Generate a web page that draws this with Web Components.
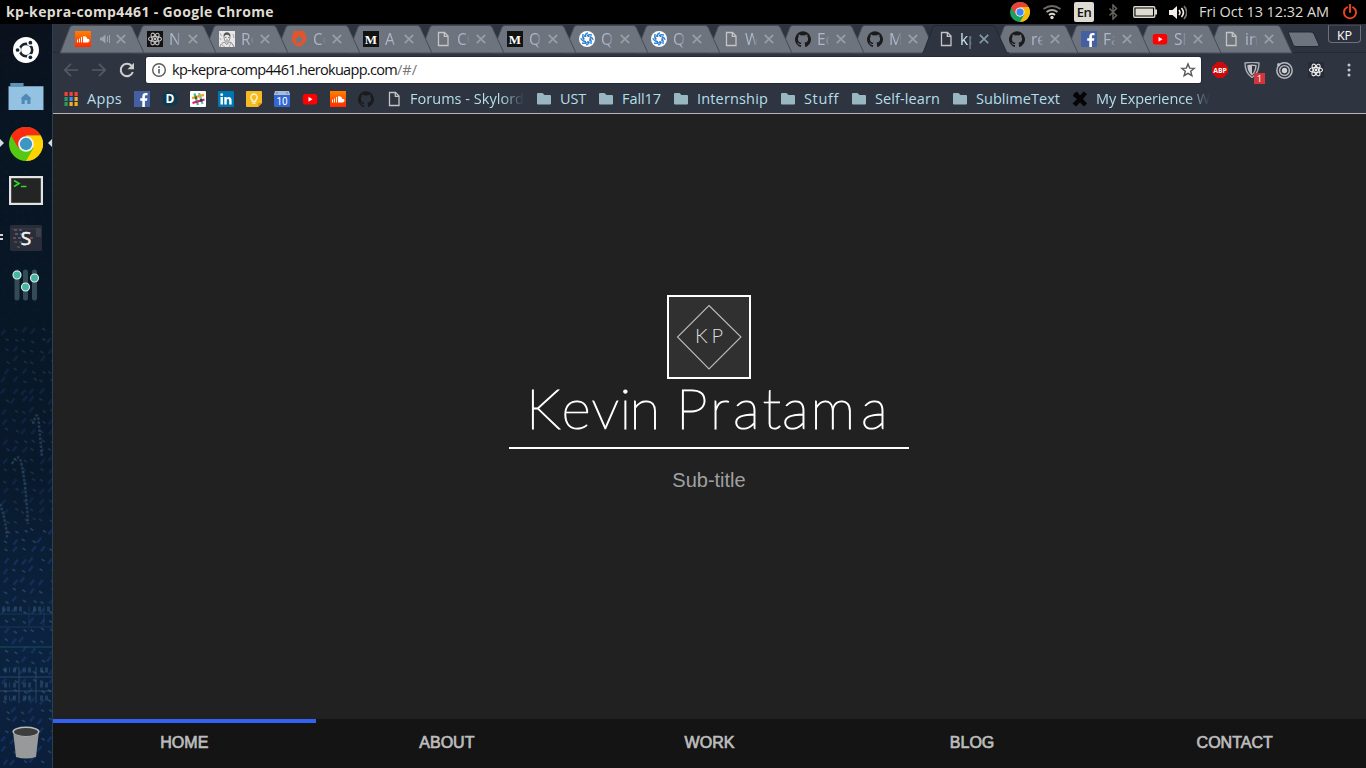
<!DOCTYPE html>
<html lang="en">
<head>
<meta charset="utf-8">
<title>kp-kepra-comp4461 - Google Chrome</title>
<style>
html,body{margin:0;height:100%;overflow:hidden;background:#000}
body{font-family:"Open Sans","Noto Sans",sans-serif}
</style>
</head>
<body>
<desk-top></desk-top>
<script>
const GH='<path fill="#1b1b1d" d="M8 .3a8 8 0 0 0-2.500 15.600c.4.1.5-.2.5-.4v-1.500c-2.200.5-2.700-.9-2.700-.9-.4-1-.9-1.200-.9-1.200-.7-.5.1-.5.1-.5.8.1 1.200.8 1.200.8.7 1.200 1.900.9 2.300.7.1-.5.3-.9.5-1.100-1.800-.2-3.600-.9-3.600-4 0-.9.3-1.600.8-2.100-.1-.2-.4-1 .1-2.100 0 0 .7-.2 2.200.8a7.600 7.600 0 0 1 4 0c1.500-1 2.200-.8 2.200-.8.4 1.100.2 1.900.1 2.100.5.6.8 1.300.8 2.100 0 3.100-1.900 3.700-3.700 4 .3.2.6.7.6 1.500v2.200c0 .2.1.5.5.4A8 8 0 0 0 8 .3z"/>';
const rays=(n,r1,r2,c,w)=>Array.from({length:n},(_,i)=>{const a=i*2*Math.PI/n,b=a+.9;return `<path d="M${8+r1*Math.cos(a)} ${8+r1*Math.sin(a)}A${r2} ${r2} 0 0 1 ${8+r2*Math.cos(b)} ${8+r2*Math.sin(b)}" fill="none" stroke="${c}" stroke-width="${w}"/>`}).join('');
const atom=c=>`<g fill="none" stroke="${c}" stroke-width="1.100"><ellipse cx="8" cy="8" rx="6.500" ry="2.500"/><ellipse cx="8" cy="8" rx="6.500" ry="2.500" transform="rotate(60 8 8)"/><ellipse cx="8" cy="8" rx="6.500" ry="2.500" transform="rotate(120 8 8)"/></g><circle cx="8" cy="8" r="1.400" fill="${c}"/>`;
const chrome=(r,y,g,b)=>`<circle cx="8" cy="8" r="8" fill="${g}"/><path d="M1.070 4A8 8 0 0 1 14.930 4H8L4.540 10z" fill="${r}"/><path d="M14.930 4A8 8 0 0 1 8 16L11.460 10 8 4z" fill="${y}"/><path d="M1.070 4L4.540 10 8 8V4z" fill="${r}"/><circle cx="8" cy="8" r="3.700" fill="#f3f3f3"/><circle cx="8" cy="8" r="2.900" fill="${b}"/>`;
const ICONS={
 github:GH,
 soundcloud:'<defs><linearGradient id="g" x2="0" y2="1"><stop stop-color="#ff8000"/><stop offset="1" stop-color="#ff2a00"/></linearGradient></defs><path fill="url(#g)" d="M0 0h16v16H0z"/><path d="M2.500 8.500v3M4.500 7.500v4M6.500 6v5.500" stroke="#fff" stroke-width="1"/><path fill="#fff" d="M8 5.500c2.200-1 4 .3 4.200 2.400 3-.6 3 3.600.3 3.600H8z"/>',
 react:'<path d="M0 0h16v16H0z" fill="#111"/>'+atom('#c2c2c2'),
 reactx:'<path d="M0 0h16v16H0z" fill="#272b35"/>'+atom('#f0f0f0'),
 photo:'<path fill="#e8e8e8" d="M0 0h16v16H0z"/><path d="M4.500 5c0-5 7-5 7 0l-1 0c-2-2-3.500-1-5 0z" fill="#555"/><path d="M5 5c0 4 1.500 6 3 6s3-2 3-6M6 6.500h1.500M9 6.500h1.500M7 9h2M1 16c1-4 3-4 4.500-5l2 2.500 3-2.500c3 1 3 2 4.500 5" stroke="#777" stroke-width=".9" fill="none"/><path d="M3 14l3 2M12 12l-2 4M1 2l1.500 3M1 7l1 2M14 3l1 4" stroke="#999" stroke-width=".8"/>',
 auth0:'<path fill="#e2552c" d="M3 0h10L15.500 7.500C15 12 11 14.500 8 16 5 14.500 1 12 .5 7.500z"/><path fill="#707680" d="M8 3.500l1.300 3.400H13l-2.900 2.400 1 3.700L8 10.800 4.900 13l1-3.700L3 6.900h3.700z"/>',
 medium:'<path d="M0 0h16v16H0z" fill="#121212"/><text x="8" y="12.500" font-size="13" text-anchor="middle" font-weight="700" fill="#fff" font-family="Liberation Serif,serif">M</text>',
 doc:'<path d="M3.500 1.500h6L13 5v9.500H3.500zM9.300 1.500V5.300H13" fill="none" stroke="#c4c4c4" stroke-width="1.300"/>',
 swirl:'<circle cx="8" cy="8" r="8" fill="#fff"/>'+rays(8,3.5,6.3,'#2f86dc',1.5)+'<circle cx="8" cy="8" r="3.200" fill="#fff" stroke="#2269ad" stroke-width="1.300" stroke-dasharray="2 1"/>',
 facebook:'<path fill="#4460a0" d="M0 0h16v16H0z"/><path fill="#fff" d="M8.300 16V9.700H6.200V7.200h2.100V5.400c0-2.200 1.300-3.400 3.300-3.400l1.900.1v2.200h-1.300c-1 0-1.300.5-1.300 1.200v1.700h2.500l-.4 2.500h-2.100V16z"/>',
 youtube:'<rect x=".8" y="3" width="14.400" height="10.400" rx="2.600" fill="#f00"/><path fill="#fff" d="M6.500 5.700v5l4-2.500z"/>',
 disq:'<path fill="#0b3a50" d="M4 1h8l3.500 4v6L12 15H4L.5 11V5z"/><text x="8" y="12.300" font-size="12" font-weight="700" text-anchor="middle" fill="#fff" font-family="Open Sans,sans-serif">D</text>',
 slack:'<rect width="16" height="16" rx="1" fill="#fff"/><g stroke-width="2.300"><path d="M4.500 2.500l3.500 11.500" stroke="#3eb991"/><path d="M9 2l3.500 11" stroke="#5cc5c9"/><path d="M2 7.200L14 3.800" stroke="#e9a820"/><path d="M2.500 12L14.500 8.500" stroke="#e01765"/><path d="M5.400 5.400l.8 2.600" stroke="#3f5f3a"/><path d="M10.900 8l.7 2.600" stroke="#472d49"/></g>',
 linkedin:'<rect width="16" height="16" rx="1" fill="#0077b5"/><path fill="#fff" d="M2.500 6H5v7.500H2.500zM6.300 6h2.300v1c1.300-1.900 5-1.400 5 2v4.500h-2.400V9.700c0-2.200-2.500-2-2.500 0v3.800H6.300z"/><circle cx="3.700" cy="3.700" r="1.400" fill="#fff"/>',
 keep:'<path fill="#f6bb20" d="M1 0h14q1 0 1 1v11l-4 4H1q-1 0-1-1V1q0-1 1-1z"/><path d="M12 16v-4h4z" fill="#e39b08"/><path d="M8 3a3.300 3.300 0 0 0-1.700 6v1.500h3.400V9A3.300 3.300 0 0 0 8 3zM6.500 12.300h3" fill="none" stroke="#fff4ca" stroke-width="1.300"/>',
 calendar:'<path fill="#3367d6" d="M0 2h16v13q0 1-1 1H1q-1 0-1-1z"/><path fill="#a9bdd9" d="M1 0h14l1 4H0z"/><path d="M3 1v2M13 1v2" stroke="#777"/><text x="8" y="13.500" font-size="10" text-anchor="middle" fill="#fff" font-family="Roboto,sans-serif">10</text>',
 apps:['#f0433a','#f0433a','#f0433a','#2d9b5f','#3f8cf4','#f0b020','#2d9b5f','#f0b020','#f0b020'].map((c,i)=>`<rect x="${1.5+i%3*5}" y="${1+(i/3|0)*5}" width="3.200" height="4" fill="${c}"/>`).join(''),
 folder:'<path fill="#98b7c1" d="M2 2h4.500l2 2H14q1 0 1 1v7.500q0 1-1 1H2q-1 0-1-1V3q0-1 1-1z"/>',
 xmark:'<path d="M2 2.500l3-2 3 4 3.500-4L15 3l-4 5 4 4.500-3 3-4-4-4 4-3.500-3L5 8 1 5z" fill="#050505"/>',
 ubuntu:'<circle cx="8" cy="8" r="8" fill="#fff"/><circle cx="8" cy="8" r="3.800" fill="none" stroke="#1a2530" stroke-width="1.600"/><g fill="#fff"><circle cx="2.900" cy="8" r="2"/><circle cx="10.600" cy="3.600" r="2"/><circle cx="10.600" cy="12.400" r="2"/></g><g fill="#1a2530"><circle cx="2.800" cy="8" r="1.150"/><circle cx="10.700" cy="3.500" r="1.150"/><circle cx="10.700" cy="12.500" r="1.150"/></g>',
 files:'<path fill="#94c2e3" d="M.1 1.500h15.800v10.700H.1z"/><path fill="#5b93b9" d="M.9 0h6v1.500h-6z"/><path fill="#5189b5" d="M8 4.700l2.500 2.300H10v2.500H8.600V7.800H7.400v1.700H6V7h-.5z"/>',
 chromeb:chrome('#fa2c12','#ffd200','#55c813','#3a98c3'),
 chromep:chrome('#ea4335','#fbbc05','#19a15f','#4285f4'),
 terminal:'<path fill="#e2e3e2" d="M0 0h34v29H0z"/><path fill="#222524" d="M2.200 2.200h29.600v24.600H2.200z"/><path d="M5 4.500l5 3-5 3M12 10.500h5.500" stroke="#32d72f" stroke-width="1.700" fill="none"/>',
 sublime:'<rect width="32" height="26" rx="1.500" fill="#292c39"/><path d="M1 4h30" stroke="#3b3e4c"/><g stroke="#a46b72" stroke-dasharray="3 2"><path d="M4 5h10M3 13h8M20 13h5"/><path d="M5 9h9M13 20h5" stroke="#668f9d"/><path d="M4 17h9M7 22h4" stroke="#68655b"/></g><path d="M26 3v9h5V3z" fill="#3c404b"/><text x="16" y="20" font-size="19" text-anchor="middle" fill="#f4f4f4" stroke="#f4f4f4" stroke-width=".6" font-family="Open Sans,sans-serif">S</text>',
 mixer:'<g stroke="#334b56" stroke-width="5" stroke-linecap="round"><path d="M5 3v26M13.500 3v26M22.500 3v26"/></g><g stroke="#e9efed" stroke-width="1.100" fill="#45b6a1"><circle cx="5" cy="6" r="4"/><circle cx="13.500" cy="18" r="4"/><circle cx="22.500" cy="9" r="4"/></g>',
 trash:'<path d="M1 5l3 26q10 3 20 0l3-26z" fill="#97999b"/><ellipse cx="14" cy="5.500" rx="13.500" ry="5" fill="#b8babb"/><ellipse cx="14" cy="6" rx="12" ry="4" fill="#3d3d3d"/>',
 wifi:'<g fill="none" stroke="#dfdbd2" stroke-width="1.800"><path d="M7 11q3-2.500 6 0"/><path d="M4.500 8q5.500-4 11 0" stroke="#aaa7a1"/><path d="M1.500 5q8.500-6 17 0" stroke="#6c6a67"/></g><circle cx="10" cy="13.500" r="1.700" fill="#dfdbd2"/>',
 bt:'<path d="M1.500 4.500l7 7-3.500 3.500V1l3.500 3.500-7 7" fill="none" stroke="#66645f" stroke-width="1.500"/>',
 battery:'<rect x=".75" y=".75" width="21" height="10.500" rx="1" fill="none" stroke="#dfdbd2" stroke-width="1.300"/><path d="M2.500 2.500h17.500v7H2.500zM22 3.500h2v5h-2z" fill="#dfdbd2"/>',
 volume:'<path d="M0 5h3.500L8 1v13L3.500 10H0z" fill="#f3f0e9"/><g fill="none" stroke="#f3f0e9" stroke-width="1.600"><path d="M10 5q2 2.500 0 5"/><path d="M12.500 3q3.800 4.500 0 9"/><path d="M15 1q5.500 6.500 0 13" stroke="#777"/></g>',
 power:'<path d="M5 3.200a6 6 0 1 0 6 0M8 .5V8" fill="none" stroke="#f0441f" stroke-width="1.900" stroke-linecap="round"/>',
 back:'<path d="M15 8H2M8 1.800L1.800 8 8 14.200" fill="none" stroke="#555961" stroke-width="1.700"/>',
 fwd:'<path d="M1 8H14M8 1.800L14.200 8 8 14.200" fill="none" stroke="#555961" stroke-width="1.700"/>',
 reload:'<path d="M13.800 10A6.200 6.200 0 1 1 12.500 3.700" fill="none" stroke="#cdcdcd" stroke-width="2.100"/><path d="M15 .7v6.500H8.500z" fill="#cdcdcd"/>',
 info:'<circle cx="8" cy="8" r="6.300" fill="none" stroke="#5a5a5a" stroke-width="1.400"/><path d="M8 7v4.500M8 4.300v1.700" stroke="#5a5a5a" stroke-width="1.600"/>',
 star:'<path d="M8 1.900l1.700 4.200 4.500.3-3.500 2.900 1.200 4.400L8 11.300l-3.900 2.400 1.200-4.400-3.500-2.900 4.500-.3z" fill="none" stroke="#5a5a5a" stroke-width="1.400"/>',
 abp:'<path d="M5 0h6l5 5v6l-5 5H5l-5-5V5z" fill="#cc0b0b"/><text x="1.200" y="10.900" font-size="7.800" font-weight="700" textLength="13.600" lengthAdjust="spacingAndGlyphs" fill="#fff" font-family="Open Sans,sans-serif">ABP</text>',
 shield:'<path d="M1 1q7-1.500 14 0 0 10-7 14.500-7-4.500-7-14.500z" fill="#2f3440" stroke="#a9acb0" stroke-width="1.400"/><path d="M4 3.700q4-1 8 0-.4 6-4 9-3.600-3-4-9z" fill="#2f3440" stroke="#c1c3c6" stroke-width="1.300"/><path d="M4 3.700q2-.6 4-.6v9.600q-3.600-3-4-9z" fill="#c1c3c6"/>',
 target:'<g fill="none" stroke="#b9bbbf"><circle cx="8" cy="8" r="7.200" stroke-width="1.400"/><circle cx="8" cy="8" r="4.600" stroke-width="1.300"/></g><circle cx="8" cy="8" r="2.500" fill="#cfd0d2"/><circle cx="2.500" cy="2.500" r="1.500" fill="#b9bbbf"/>',
 dots:'<g fill="#c8c9cb"><circle cx="8" cy="3" r="1.500"/><circle cx="8" cy="8" r="1.500"/><circle cx="8" cy="13" r="1.500"/></g>',
 speaker:'<path d="M0 6.500h2L5.500 3.500v9L2 9.500H0z" fill="#9ea3ac"/><path d="M7.500 5v6M9.500 4v8" stroke="#9ea3ac" fill="none"/>',
 close:'<path d="M3.800 3.800l8.400 8.400M12.200 3.800l-8.400 8.400" stroke="currentColor" stroke-width="1.700"/>'
};
const define=(n,fn,after)=>customElements.define(n,class extends HTMLElement{
 connectedCallback(){ if(this.shadowRoot)return; const r=this.attachShadow({mode:'open'}); r.innerHTML=fn(this); if(after)after(this,r); }
});
const at=(e,k,d='')=>e.getAttribute(k)??d;

define('ui-icon',e=>{const w=at(e,'w',16),h=at(e,'h',w);
 return `<style>:host{display:block;flex:none;width:${w}px;height:${h}px}svg{display:block;width:100%;height:100%}</style><svg viewBox="${at(e,'box','0 0 16 16')}">${ICONS[at(e,'name')]}</svg>`});

/* A one-line label whose letter spacing is tuned to a set width. */
define('fit-text',e=>`<style>:host{display:block;flex:none;white-space:pre;width:${at(e,'w')}px}span{display:inline-block}</style><span><slot></slot></span>`,
 (e,r)=>{const s=r.querySelector('span');const n=e.textContent.length;const cur=s.getBoundingClientRect().width;s.style.letterSpacing=((+at(e,'w')-cur)/n)+'px';});

define('top-panel',()=>`<style>
:host{display:flex;height:24px;background:#000;color:#dfdbd2;align-items:center;box-sizing:border-box;padding:0 8px 0 6px}
.t{font-weight:700;font-size:14px;line-height:24px}.sp{flex:1}
.en{width:20px;height:20px;border-radius:2px;background:#dfdbd2;color:#111;font:600 13px/21px "Open Sans",sans-serif;text-align:center;letter-spacing:-.5px;margin:0 14px 0 12px}
.d{font-size:14.500px;line-height:24px;margin:0 13px 0 12px}
</style><fit-text class="t" w="268">kp-kepra-comp4461 - Google Chrome</fit-text><div class="sp"></div>
<ui-icon name="chromep" w="20" style="margin-right:12px"></ui-icon>
<ui-icon name="wifi" w="20" h="16" box="0 0 20 16"></ui-icon>
<div class="en">En</div>
<ui-icon name="bt" w="10" h="16" box="0 0 10 16"></ui-icon>
<ui-icon name="battery" w="24" h="12" box="0 0 24 12" style="margin:0 12px 0 15px"></ui-icon>
<ui-icon name="volume" w="18" h="15" box="0 0 18 15"></ui-icon>
<fit-text class="d" w="130">Fri Oct 13 12:32 AM</fit-text>
<ui-icon name="power" w="16"></ui-icon>`);

define('dock-item',e=>`<style>:host{display:grid;place-items:center;height:47px;position:relative}
i{position:absolute;top:19px;width:0;height:0;border:4px solid transparent}
.l{left:0;border-left-color:#d7dcdf;border-right-width:0}.r{right:0;border-right-color:#d7dcdf;border-left-width:0}
b{position:absolute;left:0;top:20px;width:3px;height:2px;border:solid #cfd4d8;border-width:2px 0}</style>
<slot></slot>${at(e,'mark')=='active'?'<i class="l"></i><i class="r"></i>':at(e,'mark')=='two'?'<b></b>':''}`);

define('app-dock',()=>{
 let s=7;const rnd=()=>(s=(s*16807)%2147483647)/2147483647;let p='';
 for(let x=3;x<52;x+=9)for(let y=14;y<740;y+=10){const o=y<300?.05:y<500?.3:.5;const xx=x+rnd()*4,yy=y+rnd()*4;
  p+=rnd()<.4?`<path d="M${xx-2} ${yy+3}l4-5" stroke="#1b3f78" stroke-width="2.500" opacity="${o}"/>`:`<path d="M${xx} ${yy}l3 2" stroke="#4a7895" stroke-width="1.600" opacity="${o*.8}"/>`;}
 return `<style>:host{display:flex;flex-direction:column;width:52px;border-right:1px solid #2c3e52;padding-top:2px;background:linear-gradient(#0a111c,#081523 15%,#081726 40%,#09192c 60%,#0b2340 82%,#0b1f3c);position:relative;height:742px}
 .bg{position:absolute;left:0;top:0;width:52px;height:744px}.sp{flex:1}</style>
 <svg class="bg" viewBox="0 0 52 744">${p}
 <g fill="none" stroke="#37576b" stroke-width="2.500" stroke-dasharray="2.500 1.500" opacity=".55"><path d="M12 440q7-14 10 2 4 20 6 58"/><path d="M33 400q5-18 6 2l3 30"/><path d="M0 480q6 16 7 34"/></g>
 <g stroke="#3c6384" fill="none" opacity=".6"><path d="M0 653h52M0 667h52M19 643v36M36 643v36"/><path d="M0 590h52M0 603h52M29 582v20M44 582v20" opacity=".5"/><path d="M0 623h52" stroke="#17716d"/><path d="M4 646h6M4 661h6M4 674h6M13 646h4M13 661h4M13 674h4M23 646h10M23 661h10M23 674h10M40 646h10M40 661h10M40 674h10M2 585h8M14 585h8M33 585h8M47 585h5" stroke-width="5" stroke-dasharray="3 2" opacity=".7"/></g></svg>
 <dock-item><ui-icon name="ubuntu" w="26"></ui-icon></dock-item>
 <dock-item><ui-icon name="files" w="36" h="27" box="0 0 16 12.200"></ui-icon></dock-item>
 <dock-item mark="active"><ui-icon name="chromeb" w="34"></ui-icon></dock-item>
 <dock-item><ui-icon name="terminal" w="34" h="29" box="0 0 34 29"></ui-icon></dock-item>
 <dock-item mark="two"><ui-icon name="sublime" w="32" h="26" box="0 0 32 26"></ui-icon></dock-item>
 <dock-item><ui-icon name="mixer" w="28" h="32" box="0 0 28 32"></ui-icon></dock-item>
 <div class="sp"></div><dock-item style="margin-bottom:2px"><ui-icon name="trash" w="28" h="33" box="0 0 28 33"></ui-icon></dock-item>`});

define('browser-tab',e=>{const on=e.hasAttribute('active');return `<style>
:host{display:flex;align-items:center;flex:none;position:relative;width:${at(e,'pitch')}px;height:28px;box-sizing:border-box;padding-left:15px}
.s{position:absolute;left:0;top:0;width:85px;height:28px;overflow:visible}
ui-icon{position:relative}.t{position:relative;font-size:15.500px;line-height:26px;width:12px;margin-left:6px;overflow:hidden;white-space:nowrap;color:${on?'#cfe5ee':'#adb7cc'};-webkit-mask:linear-gradient(90deg,#000 60%,transparent 105%);mask:linear-gradient(90deg,#000 60%,transparent 105%)}
.au{margin-left:9px;margin-right:-2px}.c{margin-left:4px;color:${on?'#7f9ba1':'#989da6'}}</style>
<svg class="s" viewBox="0 0 85 28"><path d="M0 28L10 2Q11 .5 13 .5H69Q71 .5 72 2L84 28z" fill="${on?'#2f3441':'#6e747e'}" stroke="${on?'#242833':'#464b56'}"/>${on?'<path d="M-1 28h87" stroke="#2f3441" stroke-width="2"/>':''}</svg>
<ui-icon name="${at(e,'icon')}" w="16"></ui-icon>${e.hasAttribute('audio')?'<ui-icon class="au" name="speaker" w="11" h="16" box="0 0 11 16"></ui-icon><ui-icon class="c" name="close" w="16"></ui-icon>':'<div class="t"><slot></slot></div><ui-icon class="c" name="close" w="16"></ui-icon>'}`});

define('tab-strip',()=>{
 const T=[['soundcloud',''],['react','N'],['photo','Re'],['auth0','Co'],['medium','A'],['doc','CO'],['medium','Q'],['swirl','Q'],['swirl','Q'],['doc','W'],['github','Ed'],['github','M'],['doc','kp'],['github','re'],['facebook','Fa'],['youtube','Sl'],['doc','in']];
 return `<style>:host{display:flex;height:29px;background:#2e3340;padding:1px 5px 0 7px;box-sizing:border-box;border-bottom:1px solid #252a35;position:relative}
 .n{width:34px;height:17px;margin:6px 0 0 8px;flex:none}.sp{flex:1}
 .kp{height:18px;width:33px;box-sizing:border-box;border:1px solid #6c717b;border-top-color:#3f4450;border-radius:0 0 4px 4px;color:#fff;font:12.500px/19px "Open Sans",sans-serif;text-align:center;background:#2b303c}</style>
 ${T.map((t,i)=>`<browser-tab icon="${t[0]}" pitch="${i<11?72:i==13?72:71}" style="z-index:${t[1]=='kp'?40:30-i}" ${i?'':'audio'} ${t[1]=='kp'?'active':''}>${t[1]}</browser-tab>`).join('')}
 <svg class="n" viewBox="0 0 34 17"><path d="M1 1h23q2 0 3 2l5 11q0 1.500-2 1.500H9q-2 0-3-2z" fill="#6e747e" stroke="#222630"/></svg><div class="sp"></div><div class="kp">KP</div>`});

define('address-bar',()=>`<style>:host{display:flex;align-items:center;height:32px;padding:3px 0 1px 10px;box-sizing:border-box;background:#2f3441}
.o{flex:none;margin-left:11px;width:1055px;height:26px;box-sizing:border-box;background:#fff;border-radius:2px;display:flex;align-items:center;padding:0 5px 0 5px;color:#111;font-size:14.500px;line-height:26px;box-shadow:0 0 0 1px #252a35}
.g{color:#777;flex:1}.x{position:relative}.x b{position:absolute;left:10px;top:11px;width:11px;height:11px;background:#d2353c;color:#fff;font:9.500px/11px "Open Sans",sans-serif;text-align:center}</style>
<ui-icon name="back" w="16"></ui-icon><ui-icon name="fwd" w="16" style="margin-left:12px"></ui-icon><ui-icon name="reload" w="16" style="margin-left:12px"></ui-icon>
<div class="o"><ui-icon name="info" w="16"></ui-icon><fit-text w="225" style="margin-left:5px">kp-kepra-comp4461.herokuapp.com</fit-text><fit-text class="g" w="20">/#/</fit-text><ui-icon name="star" w="16"></ui-icon></div>
<ui-icon name="abp" w="16" style="margin-left:11px"></ui-icon>
<div class="x" style="margin-left:16px"><ui-icon name="shield" w="16"></ui-icon><b>1</b></div>
<ui-icon name="target" w="17" style="margin-left:16px"></ui-icon>
<ui-icon name="reactx" w="16" style="margin-left:15px"></ui-icon>
<ui-icon name="dots" w="16" style="margin-left:17px"></ui-icon>`);

define('book-mark',e=>`<style>:host{display:flex;align-items:center;gap:8px;flex:none;height:28px;color:#b5dfe9;font-size:14.500px;line-height:28px}fit-text{margin-top:-1px}
.f{-webkit-mask:linear-gradient(90deg,#000 80%,transparent);mask:linear-gradient(90deg,#000 80%,transparent)}</style><ui-icon name="${at(e,'icon')}" w="16"></ui-icon>${e.hasAttribute('w')?`<fit-text class="${e.hasAttribute('fade')?'f':''}" w="${at(e,'w')}">${at(e,'label')}</fit-text>`:''}`);

define('bookmarks-bar',()=>{
 const B=[['apps','Apps',35],['facebook'],['disq'],['slack'],['linkedin'],['keep'],['calendar'],['youtube'],['soundcloud'],['github'],['doc','Forums - Skylord',114,1],['folder','UST',26],['folder','Fall17',39],['folder','Internship',71],['folder','Stuff',35],['folder','Self-learn',65],['folder','SublimeText',84],['xmark','My Experience W',114,1]];
 return `<style>:host{display:flex;gap:12px;align-items:center;height:29px;padding-left:10px;background:#2f3441;border-bottom:1px solid #b9b6ba;box-sizing:border-box}</style>`+
 B.map((b,i)=>`<book-mark icon="${b[0]}" ${b[1]?`label="${b[1]}" w="${b[2]}"`:''} ${b[3]?'fade':''}></book-mark>`).join('')});

define('hero-block',()=>`<style>:host{display:flex;flex-direction:column;align-items:center;flex:1;padding:181px 1px 0 0;box-sizing:border-box;color:#fff}
svg{display:block}.b{box-sizing:border-box;width:84px;height:84px;border:2px solid #fff;background:#303030}
.n{width:400px;height:68px;border-bottom:2px solid #fff;overflow:visible}
.s{font:20px/23px "Liberation Sans",sans-serif;color:#a0a0a0;margin-top:20px}</style>
<div class="b"><svg width="80" height="80" viewBox="0 0 80 80"><path d="M40 8.500L72 40 40 72 8.500 40z" fill="none" stroke="#bbb" stroke-width="1.100"/><text y="46" x="26 42.500" font-size="20" font-weight="300" font-family="Lato,sans-serif" fill="#ddd">KP</text></svg></div>
<svg class="n" viewBox="0 0 400 68"><text y="50" x="17 52.500 82.500 110.500 120.500 155 167 201 224 253.500 273 301.500 352" font-size="56.500" font-family="Lato,sans-serif" font-weight="100" fill="#fff" stroke="#fff" stroke-width="1.200">Kevin Pratama</text></svg>
<div class="s">Sub-title</div>`);

define('nav-item',e=>`<style>:host{display:block;flex:1;height:49px;box-sizing:border-box;border-top:4px solid ${e.hasAttribute('active')?'#3461f5':'transparent'};text-align:center;font:16px/40px "Liberation Sans",sans-serif;color:#bdbdbd;-webkit-text-stroke:.7px #bdbdbd}</style><slot></slot>`);
define('site-nav',()=>`<style>:host{display:flex;height:49px;background:#141414}</style><nav-item active>HOME</nav-item><nav-item>ABOUT</nav-item><nav-item>WORK</nav-item><nav-item>BLOG</nav-item><nav-item>CONTACT</nav-item>`);

define('browser-window',()=>`<style>:host{display:flex;flex-direction:column;width:1313px;height:744px;background:#212121;overflow:hidden}</style>
<tab-strip></tab-strip><address-bar></address-bar><bookmarks-bar></bookmarks-bar><hero-block></hero-block><site-nav></site-nav>`);
define('desk-top',()=>`<style>:host{display:block;width:1366px;height:768px;overflow:hidden}.r{display:flex}</style><top-panel></top-panel><div class="r"><app-dock></app-dock><browser-window></browser-window></div>`);
</script>
</body>
</html>
